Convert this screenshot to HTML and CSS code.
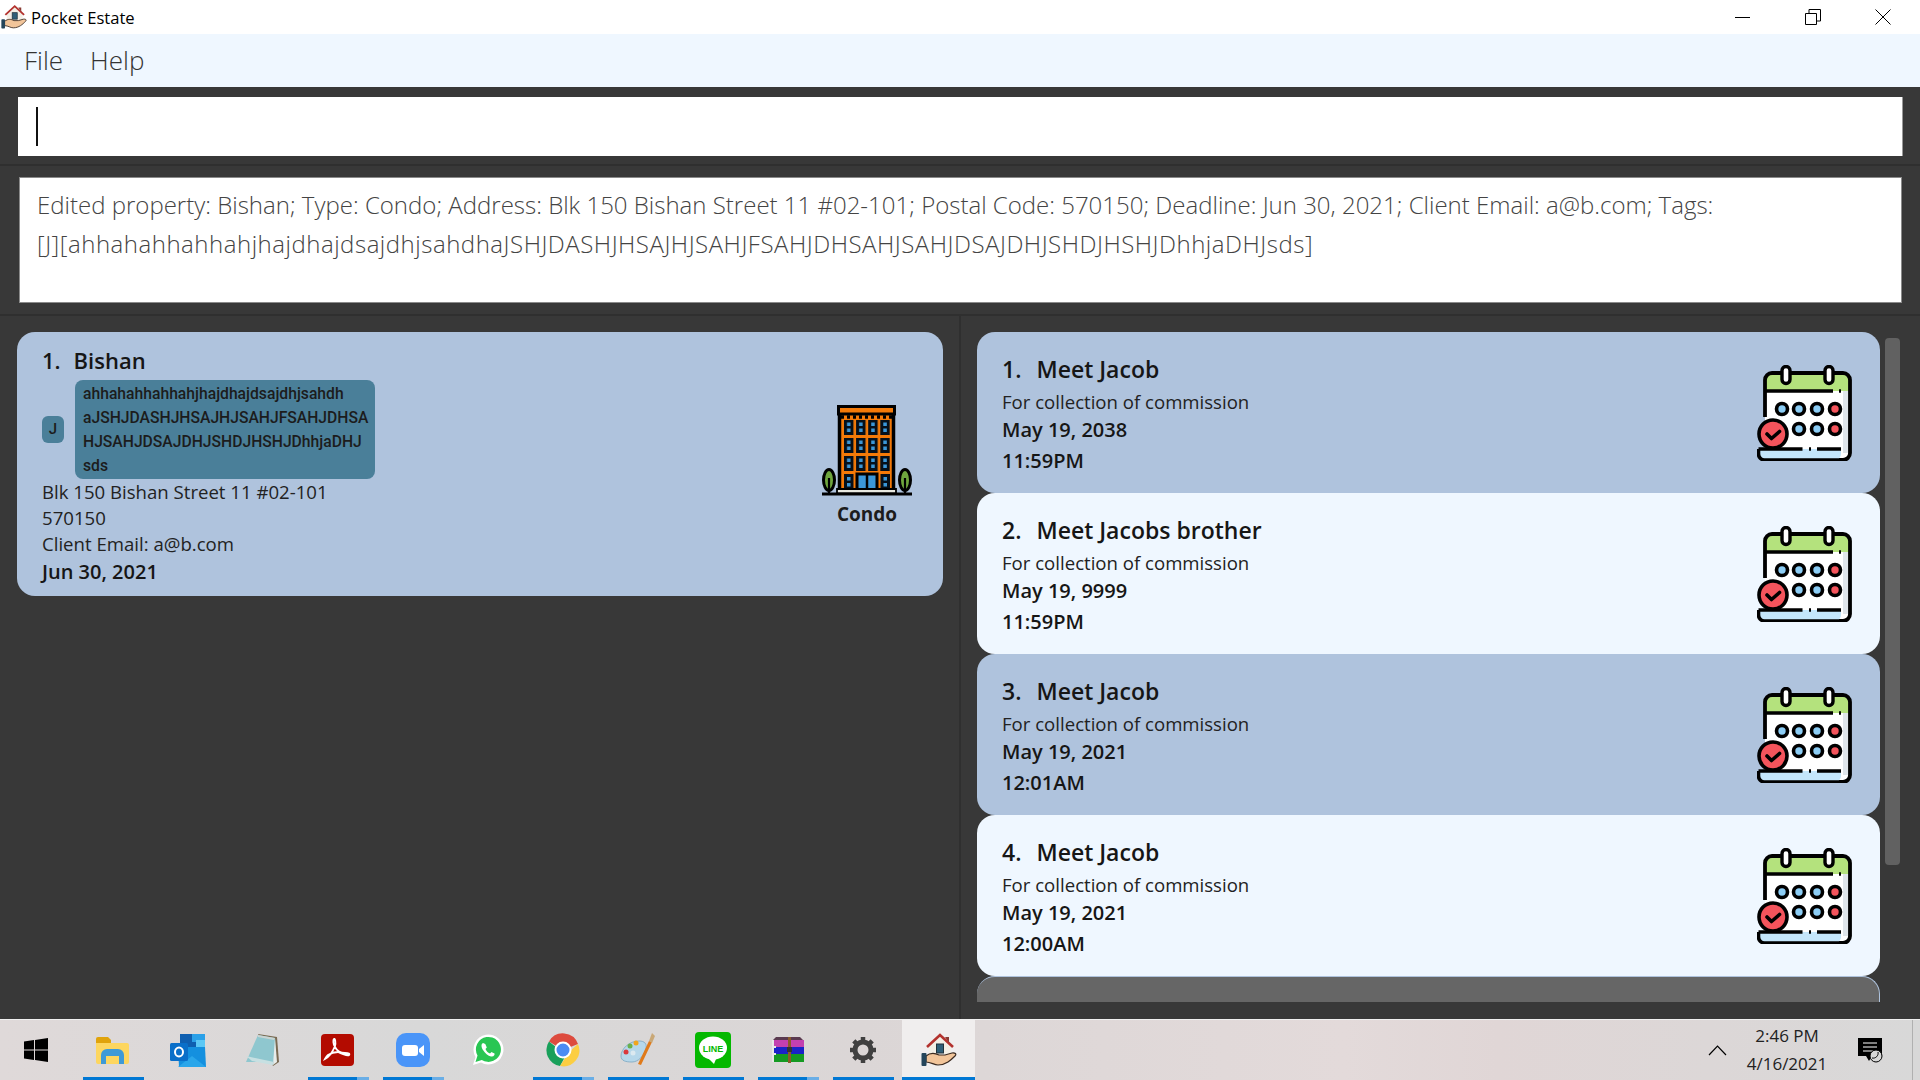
FILE: index.html
```html
<!DOCTYPE html>
<html lang="en">
<head>
    <meta charset="UTF-8">
    <title>Pocket Estate</title>
    <link rel="stylesheet" href="styles.css">
</head>
<body>

<!-- shared icons -->
<svg class="defs" width="0" height="0">
    <defs>
        <symbol id="calendar" viewBox="0 0 96 96">
            <rect x="8" y="9" width="85" height="85" rx="7" fill="#fff"/>
            <path d="M8 26V15a7 7 0 0 1 7-7h71a7 7 0 0 1 7 7v11z" fill="#b4e27d"/>
            <path d="M86 88V26h7v62z" fill="#dfe5ea"/>
            <path d="M8 52V15a7 7 0 0 1 7-7h71a7 7 0 0 1 7 7v73a7 7 0 0 1-7 7H8" fill="none" stroke="#000" stroke-width="3.8"/>
            <path d="M8 26h68M82 26h2" stroke="#000" stroke-width="3.4" fill="none"/>
            <rect x="25" y="1.5" width="8" height="17" rx="4" fill="#fff" stroke="#000" stroke-width="3.4"/>
            <rect x="68" y="1.5" width="8" height="17" rx="4" fill="#fff" stroke="#000" stroke-width="3.4"/>
            <g stroke="#000" stroke-width="3.6">
                <circle cx="25" cy="44" r="5.5" fill="#8ccdf5"/>
                <circle cx="42" cy="44" r="5.5" fill="#8ccdf5"/>
                <circle cx="60" cy="44" r="5.5" fill="#8ccdf5"/>
                <circle cx="78" cy="44" r="5.5" fill="#f4545c"/>
                <circle cx="42" cy="64" r="5.5" fill="#8ccdf5"/>
                <circle cx="60" cy="64" r="5.5" fill="#8ccdf5"/>
                <circle cx="78" cy="64" r="5.5" fill="#f4545c"/>
            </g>
            <path d="M2 84h82v5a6 6 0 0 1-6 6H8a6 6 0 0 1-6-6z" fill="#c4e6fb"/>
            <path d="M1.500 84h44M52 84h2M60 84h24M1.500 84v5a6 6 0 0 0 6 6H88" fill="none" stroke="#000" stroke-width="3.6"/>
            <circle cx="16" cy="69" r="14" fill="#f4545c" stroke="#000" stroke-width="3.6"/>
            <path d="M10 69l4.500 4.500 8-7" fill="none" stroke="#000" stroke-width="3.6" stroke-linecap="round" stroke-linejoin="round"/>
        </symbol>

        <symbol id="app" viewBox="0 0 36 36">
            <path d="M8 14L19 4l11 10v8H8z" fill="#f3efe6"/>
            <path d="M6 15L19 3l13 12" fill="none" stroke="#b3322e" stroke-width="2.600"/>
            <path d="M24 5h4v6" fill="#8a3a33"/>
            <rect x="15.500" y="12" width="7" height="9" fill="#2f5f78" stroke="#22333c"/>
            <path d="M5 24c5-4 9-3 13-1h6l7-2c3-.5 5 1 3 3-4 4-9 9-17 9-4 0-7-3-12-3z" fill="#f2c59a" stroke="#3a2a20" stroke-width="1.200"/>
            <rect x="0.500" y="21" width="5" height="13" rx="1" fill="#24455a"/>
        </symbol>

        <pattern id="windows" x="23" y="15" width="12.100" height="18" patternUnits="userSpaceOnUse">
            <rect x="0" y="0" width="9.500" height="15" fill="#06101a"/>
            <rect x="3" y="2.500" width="3.500" height="3.500" fill="#3b97d8"/>
            <rect x="3" y="8.500" width="3.500" height="3.500" fill="#3b97d8"/>
        </pattern>
    </defs>
</svg>

<header class="titlebar">
    <svg class="title-icon"><use href="#app"/></svg>
    <span class="title-text">Pocket Estate</span>
    <div class="win-controls">
        <svg width="16" height="16" viewBox="0 0 16 16"><path d="M0 8.500h15" stroke="#000" fill="none"/></svg>
        <svg width="16" height="16" viewBox="0 0 16 16"><path d="M.5 4.500h11v11H.5zM4 4.500V.5h11.500V12h-4" stroke="#000" fill="none"/></svg>
        <svg width="16" height="16" viewBox="0 0 16 16"><path d="M.5.500l15 15M15.500.500l-15 15" stroke="#000" fill="none"/></svg>
    </div>
</header>

<nav class="menubar">
    <span>File</span>
    <span>Help</span>
</nav>

<section class="command-section">
    <div class="command-box"><span class="caret"></span></div>
</section>

<section class="result-section">
    <div class="result-box">Edited property: Bishan; Type: Condo; Address: Blk 150 Bishan Street 11 #02-101; Postal Code: 570150; Deadline: Jun 30, 2021; Client Email: a@b.com; Tags: <span class="result-tags">[J][ahhahahhahhahjhajdhajdsajdhjsahdhaJSHJDASHJHSAJHJSAHJFSAHJDHSAHJSAHJDSAJDHJSHDJHSHJDhhjaDHJsds]</span></div>
</section>

<main class="lists">
    <div class="property-panel">
        <article class="property-card">
            <div class="property-info">
                <h2 class="card-title small"><span class="card-index">1.</span>Bishan</h2>
                <div class="tags">
                    <span class="tag">J</span>
                    <span class="tag tag-long">ahhahahhahhahjhajdhajdsajdhjsahdh<br>aJSHJDASHJHSAJHJSAHJFSAHJDHSA<br>HJSAHJDSAJDHJSHDJHSHJDhhjaDHJ<br>sds</span>
                </div>
                <p class="line">Blk 150 Bishan Street 11 #02-101</p>
                <p class="line">570150</p>
                <p class="line">Client Email: a@b.com</p>
                <p class="line-bold">Jun 30, 2021</p>
            </div>
            <div class="property-type">
                <svg class="condo-icon" viewBox="0 0 92 92">
                    <rect x="18.500" y="8" width="54" height="78" fill="#f47a08" stroke="#000" stroke-width="3.500"/>
                    <rect x="17.500" y="1.500" width="56" height="7.500" fill="#f47a08" stroke="#000" stroke-width="3"/>
                    <path d="M20 12h51" stroke="#000" stroke-width="3.500" stroke-dasharray="3 3"/>
                    <rect x="23" y="15" width="46" height="51" fill="url(#windows)"/>
                    <rect x="23" y="69" width="9.500" height="16" fill="#06101a"/>
                    <rect x="26" y="72" width="3.500" height="3.500" fill="#3b97d8"/>
                    <rect x="26" y="78" width="3.500" height="3.500" fill="#3b97d8"/>
                    <rect x="59.500" y="69" width="9.500" height="16" fill="#06101a"/>
                    <rect x="62.500" y="72" width="3.500" height="3.500" fill="#3b97d8"/>
                    <rect x="62.500" y="78" width="3.500" height="3.500" fill="#3b97d8"/>
                    <rect x="36" y="69" width="20" height="16" fill="#3b97d8" stroke="#000" stroke-width="3"/>
                    <path d="M46 69v16" stroke="#000" stroke-width="2.500"/>
                    <path d="M16 84h59v4.500H16z" fill="#e8e8e0" stroke="#000" stroke-width="1.800"/>
                    <path d="M1 89h90" stroke="#000" stroke-width="3"/>
                    <ellipse cx="8" cy="75" rx="5.500" ry="10.500" fill="#6fa63e" stroke="#000" stroke-width="3"/>
                    <ellipse cx="84" cy="75" rx="5.500" ry="10.500" fill="#6fa63e" stroke="#000" stroke-width="3"/>
                    <path d="M8 73v16M84 73v16" stroke="#000" stroke-width="2.200"/>
                </svg>
                <span class="type-label">Condo</span>
            </div>
        </article>
    </div>

    <div class="meeting-panel">
        <div class="meeting-list">
            <article class="meeting-card">
                <div class="meeting-info">
                    <h2 class="card-title"><span class="card-index">1.</span>Meet Jacob</h2>
                    <p class="line">For collection of commission</p>
                    <p class="line-bold">May 19, 2038</p>
                    <p class="line-bold">11:59PM</p>
                </div>
                <svg class="calendar-icon"><use href="#calendar"/></svg>
            </article>
            <article class="meeting-card alt">
                <div class="meeting-info">
                    <h2 class="card-title"><span class="card-index">2.</span>Meet Jacobs brother</h2>
                    <p class="line">For collection of commission</p>
                    <p class="line-bold">May 19, 9999</p>
                    <p class="line-bold">11:59PM</p>
                </div>
                <svg class="calendar-icon"><use href="#calendar"/></svg>
            </article>
            <article class="meeting-card">
                <div class="meeting-info">
                    <h2 class="card-title"><span class="card-index">3.</span>Meet Jacob</h2>
                    <p class="line">For collection of commission</p>
                    <p class="line-bold">May 19, 2021</p>
                    <p class="line-bold">12:01AM</p>
                </div>
                <svg class="calendar-icon"><use href="#calendar"/></svg>
            </article>
            <article class="meeting-card alt">
                <div class="meeting-info">
                    <h2 class="card-title"><span class="card-index">4.</span>Meet Jacob</h2>
                    <p class="line">For collection of commission</p>
                    <p class="line-bold">May 19, 2021</p>
                    <p class="line-bold">12:00AM</p>
                </div>
                <svg class="calendar-icon"><use href="#calendar"/></svg>
            </article>
            <div class="meeting-card empty"></div>
        </div>
        <div class="scrollbar"></div>
    </div>
</main>

<footer class="taskbar">
    <div class="task-start">
        <svg width="24" height="24" viewBox="0 0 24 24"><path d="M0 3.500l10-1.400v9.400H0zM11 2l13-2v11.500H11zM0 12.500h10v9.400L0 20.500zM11 12.500h13V24l-13-2z" fill="#000"/></svg>
    </div>

    <div class="task-item open">
        <svg width="33" height="28" viewBox="0 0 33 28">
            <path d="M0 3a2 2 0 0 1 2-2h10l3 3v4H0z" fill="#e0a30b"/>
            <path d="M0 7h31a2 2 0 0 1 2 2v17a2 2 0 0 1-2 2H2a2 2 0 0 1-2-2z" fill="#fdd65f"/>
            <path d="M5 28v-9a6 6 0 0 1 6-6h11a6 6 0 0 1 6 6v9h-5v-8H10v8z" fill="#3f9ad6"/>
        </svg>
    </div>
    <div class="task-item">
        <svg width="36" height="33" viewBox="0 0 36 33">
            <rect x="10" y="0" width="25" height="16" fill="#0f5fb0"/>
            <rect x="22" y="0" width="13" height="8" fill="#2aa0e8"/>
            <rect x="26" y="6" width="9" height="9" fill="#5cc8f5"/>
            <path d="M8 13h27l1 20H9z" fill="#1490df"/>
            <path d="M8 33l14-11 14 11z" fill="#2aa6ea"/>
            <rect x="0" y="9" width="18" height="18" rx="1.500" fill="#0a6fc9"/>
            <ellipse cx="9" cy="18" rx="4" ry="4.500" fill="none" stroke="#fff" stroke-width="2"/>
        </svg>
    </div>
    <div class="task-item">
        <svg width="33" height="32" viewBox="0 0 33 32">
            <path d="M12 0l19 3 2 25-6 4z" fill="#7a6a52"/>
            <path d="M12 1l17 3 1 24-30 0z" fill="#8fc7cf"/>
            <path d="M29 4l2 24-4 3z" fill="#e8ecea"/>
            <path d="M12 1l17 3-1 2-16-3z" fill="#c9d4d2"/>
            <path d="M0 22l28 6-1 3L6 27z" fill="#c7e0e2"/>
        </svg>
    </div>
    <div class="task-item open split">
        <svg width="33" height="32" viewBox="0 0 33 32">
            <rect width="33" height="32" rx="4" fill="#b30b00"/>
            <path d="M4 25c4-2 8-8 10-13 1-3 0-8-1-7s-1 5 1 8c2 4 5 6 10 6 4 0 5 1 4 2s-7-1-11-3c-3 0-7 1-10 3-2 2-3 4-3 4z" fill="none" stroke="#fff" stroke-width="1.800"/>
        </svg>
    </div>
    <div class="task-item open split">
        <svg width="34" height="34" viewBox="0 0 34 34">
            <rect width="34" height="34" rx="10" fill="#4a95f8"/>
            <rect x="6" y="12" width="16" height="11" rx="3" fill="#fff"/>
            <path d="M23 16l5-4v11l-5-4z" fill="#fff"/>
        </svg>
    </div>
    <div class="task-item">
        <svg width="32" height="32" viewBox="0 0 32 32">
            <path d="M1 31l2.500-8A15 15 0 1 1 9 28.500z" fill="#fff"/>
            <path d="M3.500 28l2-6.500A12.500 12.500 0 1 1 9.800 26z" fill="#29c653"/>
            <path d="M11 9c-2 1-2 4 0 7s5 6 8 6.500 4-2 3.500-3l-3-1.500-1.500 1.500c-2-.5-4-3-4.500-4.500l1.300-1.500-1.500-3.500z" fill="#fff"/>
        </svg>
    </div>
    <div class="task-item open split">
        <svg width="34" height="34" viewBox="0 0 34 34">
            <path d="M17 17L3 8.500A16 16 0 0 1 32 11z" fill="#dd4b3e"/>
            <path d="M3 8.500A16 16 0 0 0 14 33l6-11z" fill="#19a05a"/>
            <path d="M32 11A16 16 0 0 1 14 33l9-14z" fill="#fcce42"/>
            <circle cx="17" cy="17" r="7.500" fill="#4a8bf4" stroke="#fff" stroke-width="2"/>
        </svg>
    </div>
    <div class="task-item open">
        <svg width="36" height="36" viewBox="0 0 36 36">
            <path d="M1 24c0-7 8-15 18-15 6 0 8 3 7 8-2 7-8 13-14 13-6 0-11-1-11-6z" fill="#b6d7ea" stroke="#8ab1c8"/>
            <circle cx="6" cy="20" r="2.500" fill="#d9383c"/>
            <circle cx="10" cy="14" r="2.500" fill="#6ab04c"/>
            <circle cx="16" cy="11" r="2.500" fill="#f0a51f"/>
            <circle cx="13" cy="21" r="2.500" fill="#dce9f0"/>
            <path d="M18 32L29 9l3 1-11 23z" fill="#e07a1a"/>
            <path d="M29 9l3-8 3 3-3 7z" fill="#c9a877"/>
        </svg>
    </div>
    <div class="task-item open">
        <svg width="36" height="36" viewBox="0 0 36 36">
            <rect width="36" height="36" rx="4" fill="#04b800"/>
            <ellipse cx="18" cy="16" rx="14" ry="11.500" fill="#fff"/>
            <path d="M13 26l6 6 2-5z" fill="#fff"/>
            <text class="line-logo" x="18" y="19.500" text-anchor="middle">LINE</text>
        </svg>
    </div>
    <div class="task-item open split">
        <svg width="32" height="26" viewBox="0 0 32 26">
            <path d="M0 4l4-4h24l4 4v5H0z" fill="#5b3a50"/>
            <rect x="1" y="3" width="31" height="7" fill="#c340b0"/>
            <rect x="1" y="10" width="31" height="7" fill="#1a22c8"/>
            <rect x="1" y="17" width="31" height="8" fill="#159a22"/>
            <path d="M1 3v22M1 10h3M1 17h3" stroke="#e8e8e8" stroke-width="2" fill="none"/>
            <rect x="16" y="0" width="3" height="26" fill="#8a5a2a"/>
            <rect x="15" y="10" width="5" height="5" fill="#333"/>
        </svg>
    </div>
    <div class="task-item open">
        <svg width="28" height="28" viewBox="0 0 28 28">
            <circle cx="14" cy="14" r="8" fill="none" stroke="#404040" stroke-width="5"/>
            <path d="M14 1v26M1 14h26M4.800 4.800l18.400 18.400M23.200 4.800L4.800 23.200" stroke="#404040" stroke-width="4.500" stroke-dasharray="5 16 5 0"/>
        </svg>
    </div>
    <div class="task-item active">
        <svg width="36" height="36"><use href="#app"/></svg>
    </div>

    <div class="tray">
        <svg class="tray-chevron" width="19" height="11" viewBox="0 0 19 11"><path d="M1 10l8.500-9L18 10" fill="none" stroke="#000" stroke-width="1.200"/></svg>
        <div class="clock">
            <span>2:46 PM</span>
            <span>4/16/2021</span>
        </div>
        <svg class="tray-notify" width="25" height="25" viewBox="0 0 25 25">
            <path d="M0 0h24v18H14l-3 5-3-5H0z" fill="#000"/>
            <path d="M5 5h14M5 9h14M5 13h10" stroke="#fff" fill="none"/>
            <circle cx="18" cy="18" r="6" fill="#d8d8d8" stroke="#000"/>
            <path d="M20 14a5 5 0 0 1-6 6" fill="none" stroke="#000"/>
        </svg>
        <div class="show-desktop"></div>
    </div>
</footer>

</body>
</html>
```

FILE: styles.css
```css
/* Estilos de la ventana */
html, body {
    margin: 0;
    padding: 0;
}
body {
    width: 1920px;
    height: 1080px;
    overflow: hidden;
    display: flex;
    flex-direction: column;
    background-color: #383838;
    font-family: "Open Sans", "Noto Sans", sans-serif;
    color: #1c1c1c;
}
.defs {
    position: absolute;
}
h2, p {
    margin: 0;
}

/* Barra de titulo */
.titlebar {
    height: 34px;
    flex: none;
    display: flex;
    align-items: center;
    background-color: #fff;
}
.title-icon {
    width: 26px;
    height: 26px;
    margin-left: 1px;
}
.title-text {
    margin-left: 4px;
    font-size: 16.600px;
    color: #000;
}
.win-controls {
    margin-left: auto;
    display: flex;
    gap: 54px;
    padding-right: 29px;
}
.menubar {
    height: 53px;
    flex: none;
    box-sizing: border-box;
    display: flex;
    align-items: center;
    gap: 27px;
    padding: 0 0 2px 24px;
    background-color: #eff7ff;
    font-size: 26px;
    font-weight: 300;
    color: #333;
}

/* Caja de comandos */
.command-section {
    height: 79px;
    flex: none;
    box-sizing: border-box;
    padding: 10px 17px 9px 18px;
    border-bottom: 2px solid #2f2f2f;
}
.command-box {
    height: 59px;
    display: flex;
    align-items: center;
    padding-left: 18px;
    background-color: #fff;
    border-right: 1px solid #999;
}
.caret {
    width: 2px;
    height: 39px;
    background-color: #111;
}
.result-section {
    height: 150px;
    flex: none;
    box-sizing: border-box;
    padding: 11px 18px 0 19px;
    border-bottom: 2px solid #2f2f2f;
}
.result-box {
    height: 126px;
    box-sizing: border-box;
    padding: 8px 16px 0 17px;
    background-color: #fff;
    border: 1px solid #8a8a8a;
    font-size: 24px;
    font-weight: 300;
    line-height: 38.500px;
    color: #444;
}
.result-tags {
    white-space: nowrap;
    letter-spacing: 0.520px;
}

/* Listas */
.lists {
    flex: 1;
    min-height: 0;
    display: flex;
}
.property-panel {
    width: 961px;
    flex: none;
    box-sizing: border-box;
    padding: 16px 16px 0 17px;
    border-right: 2px solid #2f2f2f;
}
.property-card {
    height: 264px;
    box-sizing: border-box;
    display: flex;
    justify-content: space-between;
    padding: 12px 30px 0 25px;
    background-color: #afc3dd;
    border-radius: 18px;
}
.card-title {
    font-size: 23px;
    font-weight: 600;
    line-height: 32px;
    color: #161616;
}
.card-title.small {
    font-size: 22px;
}
.card-index {
    margin-right: 15px;
}
.small .card-index {
    margin-right: 13px;
}
.tags {
    display: flex;
    align-items: center;
    gap: 11px;
    margin-top: 4px;
}
.tag {
    box-sizing: border-box;
    width: 22px;
    height: 27px;
    border-radius: 6px;
    background-color: #4a7f99;
    font-family: Roboto, sans-serif;
    font-size: 15px;
    font-weight: 500;
    line-height: 27px;
    text-align: center;
}
.tag-long {
    width: 300px;
    height: 99px;
    padding: 2px 8px;
    border-radius: 8px;
    font-size: 15.700px;
    line-height: 24px;
    text-align: left;
    white-space: nowrap;
}
.line {
    font-size: 18.600px;
    line-height: 26px;
    color: #222;
}
.line-bold {
    font-size: 20px;
    font-weight: 600;
    line-height: 29.500px;
    color: #161616;
}
.property-type {
    display: flex;
    flex-direction: column;
    align-items: center;
    margin-top: 61px;
}
.condo-icon {
    width: 92px;
    height: 92px;
}
.type-label {
    margin-top: 4px;
    font-size: 19px;
    font-weight: 700;
    color: #1c1c1c;
}

.meeting-panel {
    flex: 1;
    display: flex;
    gap: 5px;
    padding: 16px 20px 17px 16px;
    min-height: 0;
}
.meeting-list {
    width: 903px;
    flex: none;
    overflow: hidden;
}
.meeting-card {
    height: 161px;
    box-sizing: border-box;
    display: flex;
    justify-content: space-between;
    padding: 21px 27px 0 25px;
    background-color: #afc3dd;
    border-radius: 18px;
}
.meeting-card.alt {
    background-color: #eff7ff;
}
.meeting-card.empty {
    background-color: #666;
    border-top: 1px solid #afc3dd;
    border-right: 1px solid #afc3dd;
}
.meeting-info .line {
    margin-top: 4px;
}
.meeting-info .line-bold {
    line-height: 30.500px;
}
.calendar-icon {
    width: 96px;
    height: 96px;
    margin-top: 12px;
}
.scrollbar {
    width: 15px;
    height: 527px;
    margin-top: 6px;
    background-color: #616161;
    border-radius: 4px;
}

/* Barra de tareas */
.taskbar {
    height: 61px;
    flex: none;
    box-sizing: border-box;
    display: flex;
    align-items: stretch;
    border-top: 1px solid #f0f0f0;
    background: linear-gradient(90deg, #dfd9d9 0%, #d8d8d8 22%, #dbd6d6 45%, #e3dada 70%, #e0d6d6 78%, #d8d8d8 100%);
}
.task-start {
    width: 75px;
    flex: none;
    display: flex;
    align-items: center;
    justify-content: center;
    padding-right: 4px;
    box-sizing: border-box;
}
.task-item {
    position: relative;
    width: 75px;
    flex: none;
    display: flex;
    align-items: center;
    justify-content: center;
}
.task-item.open::after {
    content: "";
    position: absolute;
    left: 8px;
    bottom: 0;
    width: 61px;
    height: 3px;
    background-color: #0078d4;
}
.task-item.split::after {
    background: linear-gradient(90deg, #0078d4 80%, #6aaee6 80%);
}
.task-item.active {
    width: 73px;
    margin-left: 2px;
    background-color: #f0eeee;
}
.task-item.active::after {
    content: "";
    position: absolute;
    left: 0;
    bottom: 0;
    width: 73px;
    height: 3px;
    background-color: #0078d4;
}
.line-logo {
    font-family: "Liberation Sans", sans-serif;
    font-size: 9px;
    font-weight: 700;
    fill: #04b800;
}
.tray {
    margin-left: auto;
    display: flex;
    align-items: center;
}
.tray-chevron {
    margin-right: 12px;
}
.clock {
    width: 96px;
    display: flex;
    flex-direction: column;
    align-items: center;
    gap: 6px;
    font-size: 17px;
    line-height: 22px;
    color: #222;
}
.tray-notify {
    margin-left: 23px;
}
.show-desktop {
    width: 7px;
    height: 100%;
    margin-left: 29px;
    border-left: 1px solid #b0b0b0;
}
```
